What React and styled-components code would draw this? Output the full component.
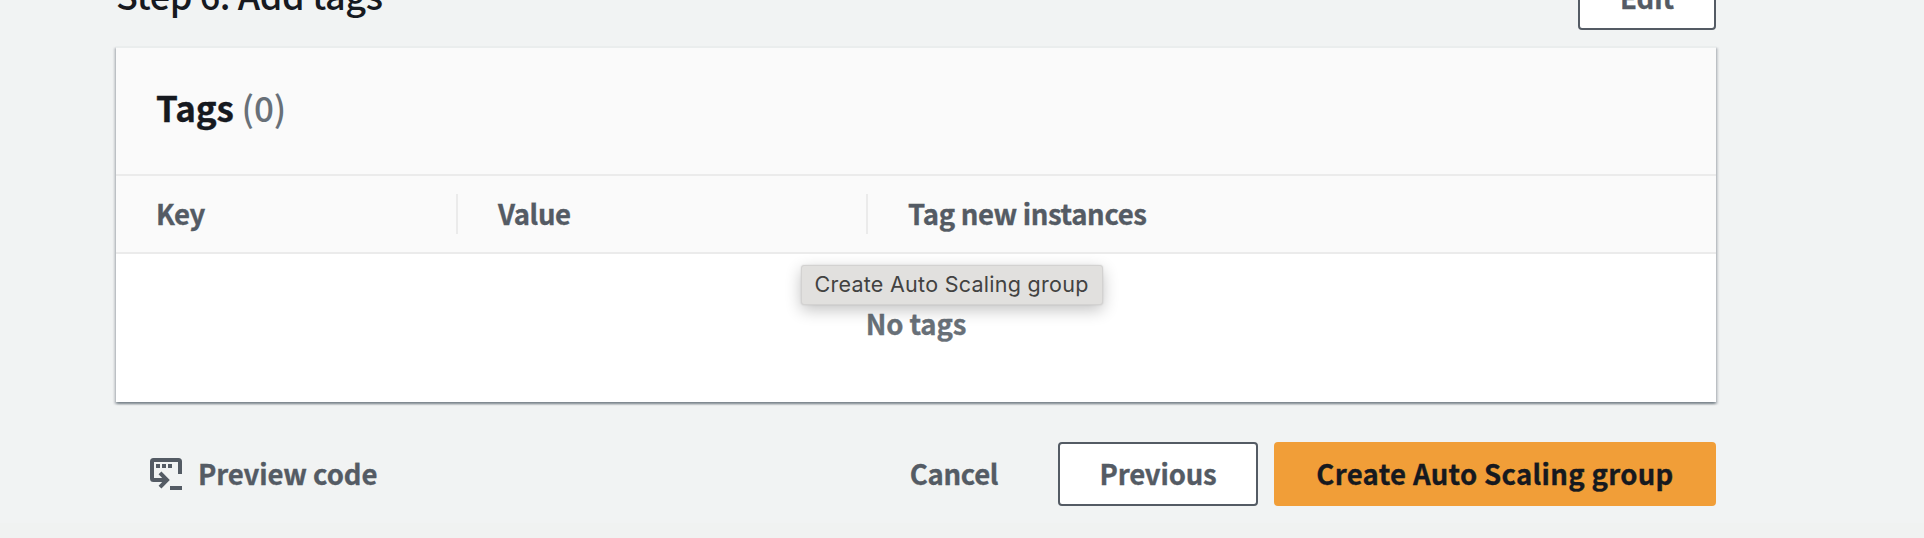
import React from 'react';
import styled, { createGlobalStyle } from 'styled-components';

const GlobalStyle = createGlobalStyle`
  *, *::before, *::after { box-sizing: border-box; }
  body {
    margin: 0;
    overflow: hidden;
    background: #f1f3f3;
    color: #16191f;
    font-family: "Noto Sans CJK JP", "Noto Sans", sans-serif;
  }
`;

const Page = styled.main`
  display: flex;
  flex-direction: column;
  height: 538px;
  padding-left: 116px;
  background: linear-gradient(#f1f3f3 523px, #f0f2f1 523px);
`;

const Content = styled.div`
  display: flex;
  flex-direction: column;
  width: 1600px;
`;

const StepHeader = styled.header`
  display: flex;
  align-items: flex-end;
  justify-content: space-between;
  height: 30px;
  margin-bottom: 16px;
`;

const StepTitle = styled.h2`
  margin: 0;
  padding-bottom: 14px;
  font-size: 36px;
  font-weight: 500;
  line-height: 44px;
  letter-spacing: -0.4px;
`;

const Button = styled.button`
  display: flex;
  align-items: center;
  justify-content: center;
  flex: none;
  width: ${(p) => p.$width}px;
  height: 64px;
  padding: 0 0 3px;
  border: 2px solid ${(p) => (p.$primary ? '#f19e38' : '#545b64')};
  border-radius: 4px;
  background: ${(p) => (p.$primary ? '#f19e38' : '#ffffff')};
  color: ${(p) => (p.$primary ? '#16191f' : '#545b64')};
  font-family: inherit;
  font-size: 27.5px;
  font-weight: 700;
  line-height: 40px;
  letter-spacing: ${(p) => p.$tracking || 0}px;
  white-space: nowrap;
  -webkit-text-stroke: 0.35px;
`;

const LinkButton = styled(Button)`
  border-color: transparent;
  background: transparent;
`;

const Panel = styled.section`
  border-top: 2px solid #eaeded;
  background: #ffffff;
  box-shadow:
    0 2px 2px 0 rgba(0, 28, 36, 0.3),
    2px 2px 2px 0 rgba(0, 14, 36, 0.15),
    -2px 2px 2px 0 rgba(0, 14, 36, 0.15);
`;

const PanelHeader = styled.div`
  height: 128px;
  padding: 37px 40px 0;
  border-bottom: 2px solid #ebebeb;
  background: #fafafa;
`;

const PanelTitle = styled.h3`
  margin: 0;
  font-size: 35px;
  font-weight: 700;
  line-height: 44px;
  letter-spacing: -0.1px;
  -webkit-text-stroke: 0.35px;
`;

const Count = styled.span`
  color: #687078;
  font-weight: 500;
  -webkit-text-stroke: 0;
`;

const ColumnRow = styled.div`
  display: grid;
  grid-template-columns: 342px 410px 1fr;
  align-items: center;
  height: 78px;
  border-bottom: 2px solid #ebebeb;
  background: #fafafa;
`;

const ColumnHead = styled.div`
  height: 40px;
  padding-left: 40px;
  border-right: 2px solid #ebebeb;
  color: #545b64;
  font-size: 27.5px;
  font-weight: 700;
  line-height: 38px;
  letter-spacing: -0.35px;
  -webkit-text-stroke: 0.35px;

  &:last-child { border-right: 0; }
`;

const PanelBody = styled.div`
  position: relative;
  display: flex;
  justify-content: center;
  height: 148px;
  padding-top: 48.5px;
`;

const EmptyText = styled.p`
  margin: 0;
  color: #687078;
  font-size: 27.5px;
  font-weight: 700;
  line-height: 40px;
  letter-spacing: -0.1px;
  -webkit-text-stroke: 0.35px;
`;

const Tooltip = styled.div`
  position: absolute;
  top: 11px;
  left: 685px;
  display: flex;
  align-items: center;
  justify-content: center;
  width: 302px;
  height: 39.5px;
  padding: 0 1px 2px 0;
  border: 1px solid #d3d2d1;
  border-radius: 3px;
  background: #e1e0de;
  box-shadow: 0 5px 16px rgba(0, 0, 0, 0.24), 0 0 2px rgba(0, 0, 0, 0.12);
  color: #424241;
  font-family: Inter, sans-serif;
  font-size: 21.5px;
  letter-spacing: 0.27px;
  white-space: nowrap;
`;

const Actions = styled.footer`
  display: flex;
  align-items: center;
  justify-content: space-between;
  margin-top: 40px;
`;

const PreviewButton = styled(LinkButton)`
  gap: 16px;
  justify-content: flex-start;
  padding-left: 32px;

  svg { position: relative; top: 1.5px; }
`;

const ActionGroup = styled.div`
  display: flex;
  gap: 16px;
`;

function PreviewIcon() {
  return (
    <svg width="32" height="32" viewBox="0 0 32 32" fill="none" stroke="#545b64" strokeWidth="4">
      <path d="M30 16V3.500Q30 2 28.500 2H3.500Q2 2 2 3.500V20.500Q2 22 3.500 22H17" />
      <path d="M10 14.800L17 22L10 29.200" />
      <path d="M20 30H32" />
      <path d="M6 8H10M12 8H16M18 8H22" />
    </svg>
  );
}

export default function App() {
  return (
    <>
      <GlobalStyle />
      <Page>
        <Content>
          <StepHeader>
            <StepTitle>Step 6: Add tags</StepTitle>
            <Button $width={138}>Edit</Button>
          </StepHeader>
          <Panel>
            <PanelHeader>
              <PanelTitle>Tags <Count>(0)</Count></PanelTitle>
            </PanelHeader>
            <ColumnRow>
              <ColumnHead>Key</ColumnHead>
              <ColumnHead>Value</ColumnHead>
              <ColumnHead>Tag new instances</ColumnHead>
            </ColumnRow>
            <PanelBody>
              <EmptyText>No tags</EmptyText>
              <Tooltip role="tooltip">Create Auto Scaling group</Tooltip>
            </PanelBody>
          </Panel>
          <Actions>
            <PreviewButton $width={294} $tracking={-0.1}><PreviewIcon />Preview code</PreviewButton>
            <ActionGroup>
              <LinkButton $width={176} $tracking={-0.3}>Cancel</LinkButton>
              <Button $width={200} $tracking={-0.2}>Previous</Button>
              <Button $primary $width={442} $tracking={0.32}>Create Auto Scaling group</Button>
            </ActionGroup>
          </Actions>
        </Content>
      </Page>
    </>
  );
}
